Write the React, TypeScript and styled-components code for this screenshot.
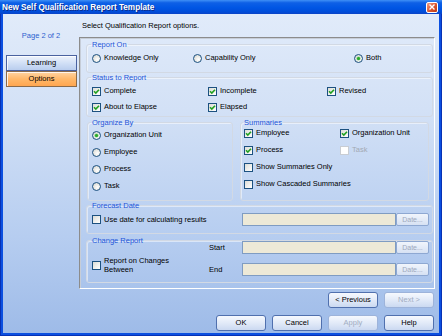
import styled, { createGlobalStyle } from 'styled-components';

const GlobalStyle = createGlobalStyle`
  html, body {
    margin: 0;
    padding: 0;
  }
  body {
    font-family: "Liberation Sans", Arial, sans-serif;
    font-size: 7.5px;
    color: #000;
  }
  #root {
    width: 442px;
    height: 336px;
  }
`;

const Window = styled.div`
  width: 442px;
  height: 336px;
  display: flex;
  flex-direction: column;
  overflow: hidden;
  background: #0b4fe0;
  box-shadow: inset 1px 0 0 #0731b4, inset -1px 0 0 #0731b4, inset 0 -1px 0 #0731b4;
`;

const TitleBar = styled.div`
  height: 14px;
  flex-shrink: 0;
  display: flex;
  align-items: center;
  justify-content: space-between;
  padding: 0 4px 0 2px;
  background: linear-gradient(180deg, #3f90f6 0%, #0e60e6 20%, #0056e4 55%, #004cd9 85%, #0a43c6 100%);
`;

const Title = styled.span`
  color: #fff;
  font-weight: bold;
  font-size: 8.2px;
  white-space: nowrap;
  text-shadow: 1px 1px 0 #0b2a8a;
`;

const CloseButton = styled.div`
  width: 12px;
  height: 11px;
  box-sizing: border-box;
  border: 1px solid #fff;
  border-radius: 2px;
  background: linear-gradient(135deg, #f2a086 0%, #da552e 55%, #bb3a15 100%);
  display: flex;
  align-items: center;
  justify-content: center;
`;

const Body = styled.div`
  flex: 1;
  margin: 0 3px 3px;
  display: flex;
  flex-direction: column;
  background: linear-gradient(180deg, #e1ebfa 0%, #d3e1f6 30%, #b6cdf0 70%, #9ebbe8 100%);
`;

const MainRow = styled.div`
  display: flex;
  height: 275px;
`;

const LeftNav = styled.div`
  width: 76px;
  flex-shrink: 0;
  padding-top: 17px;
  display: flex;
  flex-direction: column;
`;

const PageLabel = styled.div`
  text-align: center;
  line-height: 9px;
  color: #2d5fcf;
  margin-bottom: 15px;
`;

const NavButton = styled.div<{ $active?: boolean }>`
  height: 16px;
  box-sizing: border-box;
  margin: 0 2px 0 3px;
  border: 1px solid ${p => (p.$active ? '#8a6a4a' : '#4a62a0')};
  background: ${p =>
    p.$active
      ? 'linear-gradient(180deg, #ffd4a2 0%, #ffb86a 50%, #ffa650 100%)'
      : 'linear-gradient(180deg, #eef3fc 0%, #d2e0f6 50%, #b9cdee 100%)'};
  box-shadow: inset 1px 1px 0 rgba(255, 255, 255, 0.8);
  text-align: center;
  line-height: 14px;
`;

const RightCol = styled.div`
  flex: 1;
  display: flex;
  flex-direction: column;
  padding-right: 4px;
`;

const Intro = styled.div`
  padding: 7px 0 0 3px;
  line-height: 9px;
  margin-bottom: 7px;
`;

const Panel = styled.div`
  height: 252px;
  box-sizing: border-box;
  border-top: 1px solid #8c8c8c;
  border-left: 1px solid #8c8c8c;
  border-right: 1px solid #fff;
  border-bottom: 1px solid #fff;
  box-shadow: inset 1px 1px 0 #c6cdd8;
  padding: 2px 1px 0 6px;
  display: flex;
  flex-direction: column;
`;

const Group = styled.fieldset<{ $pt: number; $pb: number; $pl?: number; $mt?: number }>`
  margin: ${p => p.$mt ?? 0}px 0 0 0;
  padding: ${p => p.$pt}px 3px ${p => p.$pb}px ${p => p.$pl ?? 5}px;
  min-width: 0;
  border: 1px solid #d2d9e4;
  border-radius: 3px;
  box-shadow: inset 1px 1px 0 rgba(255, 255, 255, 0.5);
`;

const Legend = styled.legend`
  font-size: 7.5px;
  line-height: 9px;
  padding: 0 1px;
  margin-left: -1px;
  color: #1f55d8;
`;

const OptionGrid = styled.div<{ $cols: string; $gap: number }>`
  display: grid;
  grid-template-columns: ${p => p.$cols};
  row-gap: ${p => p.$gap}px;
`;

const OptionColumn = styled.div<{ $gap: number }>`
  display: flex;
  flex-direction: column;
  gap: ${p => p.$gap}px;
`;

const Option = styled.div<{ $disabled?: boolean }>`
  display: flex;
  align-items: center;
  gap: 3px;
  height: 10px;
  line-height: 10px;
  white-space: nowrap;
  color: ${p => (p.$disabled ? '#a3a9b3' : '#000')};
`;

const MultiLineOption = styled(Option)`
  height: auto;
  line-height: 9px;
  grid-row: 1 / 3;
  align-self: end;
  margin-bottom: 2px;
`;

const CheckBox = styled.span<{ $disabled?: boolean }>`
  width: 9px;
  height: 9px;
  box-sizing: border-box;
  flex-shrink: 0;
  border: 1px solid ${p => (p.$disabled ? '#c9cdd3' : '#1c5180')};
  background: ${p =>
    p.$disabled ? '#fff' : 'linear-gradient(135deg, #dcdcd6 0%, #f2f2ef 60%, #fff 100%)'};
  display: flex;
  align-items: center;
  justify-content: center;
`;

const RadioCircle = styled.span`
  width: 9px;
  height: 9px;
  box-sizing: border-box;
  flex-shrink: 0;
  border-radius: 50%;
  border: 1px solid #1c5180;
  background: radial-gradient(circle at 65% 65%, #fff 0%, #ececE8 45%, #d0d0c9 100%);
  display: flex;
  align-items: center;
  justify-content: center;
`;

const RadioDot = styled.span`
  width: 3px;
  height: 3px;
  border-radius: 50%;
  background: #28a828;
  box-shadow: 0 0 0 0.6px #86d486;
`;

const MiddleRow = styled.div`
  display: flex;
  margin: 1px 4px 0 1px;
  gap: 7px;
`;

const FieldRow = styled.div`
  display: grid;
  grid-template-columns: 150px 154px 33px;
  align-items: center;
  height: 13px;
`;

const ChangeGrid = styled.div`
  display: grid;
  grid-template-columns: 117px 33px 154px 33px;
  grid-template-rows: 13px 13px;
  row-gap: 9px;
  align-items: center;
  margin-top: -4px;
`;

const Field = styled.div`
  height: 13px;
  box-sizing: border-box;
  background: #ede9d7;
  border: 1px solid #7f9cc2;
`;

const DateButton = styled.div`
  height: 13px;
  box-sizing: border-box;
  border: 1px solid #8ea8d2;
  border-radius: 2px;
  background: linear-gradient(180deg, #f1f5fc 0%, #d6e1f3 100%);
  color: #9ea9bd;
  font-size: 7px;
  line-height: 11px;
  text-align: center;
`;

const Footer = styled.div`
  display: flex;
  flex-direction: column;
  align-items: flex-end;
  gap: 7px;
  padding: 3px 5px 0 0;
`;

const ButtonRow = styled.div`
  display: flex;
  gap: 6px;
`;

const Button = styled.div<{ $disabled?: boolean }>`
  width: 50px;
  height: 16px;
  box-sizing: border-box;
  border: 1px solid ${p => (p.$disabled ? '#9db3da' : '#5070ae')};
  border-radius: 3px;
  background: linear-gradient(180deg, #f6f9fe 0%, #e2eaf8 50%, #cbd9f1 100%);
  color: ${p => (p.$disabled ? '#a2adc2' : '#000')};
  text-align: center;
  line-height: 14px;
`;

function Check({ label, checked, disabled }: { label: string; checked?: boolean; disabled?: boolean }) {
  return (
    <Option $disabled={disabled}>
      <CheckBox $disabled={disabled}>
        {checked && (
          <svg width="7" height="7" viewBox="0 0 7 7">
            <path d="M1 3.3 L2.8 5.1 L6 1.7" fill="none" stroke="#21a121" strokeWidth="1.6" />
          </svg>
        )}
      </CheckBox>
      {label}
    </Option>
  );
}

function Radio({ label, selected }: { label: string; selected?: boolean }) {
  return (
    <Option>
      <RadioCircle>{selected && <RadioDot />}</RadioCircle>
      {label}
    </Option>
  );
}

export default function App() {
  return (
    <Window>
      <GlobalStyle />
      <TitleBar>
        <Title>New Self Qualification Report Template</Title>
        <CloseButton>
          <svg width="6" height="6" viewBox="0 0 6 6">
            <path d="M0.5 0.5 L5.5 5.5 M5.5 0.5 L0.5 5.5" stroke="#fff" strokeWidth="1.4" />
          </svg>
        </CloseButton>
      </TitleBar>
      <Body>
        <MainRow>
          <LeftNav>
            <PageLabel>Page 2 of 2</PageLabel>
            <NavButton>Learning</NavButton>
            <NavButton $active>Options</NavButton>
          </LeftNav>
          <RightCol>
            <Intro>Select Qualification Report options.</Intro>
            <Panel>
              <Group $pt={4} $pb={9}>
                <Legend>Report On</Legend>
                <OptionGrid $cols="101px 161px 1fr" $gap={0}>
                  <Radio label="Knowledge Only" />
                  <Radio label="Capability Only" />
                  <Radio label="Both" selected />
                </OptionGrid>
              </Group>
              <Group $pt={4} $pb={4}>
                <Legend>Status to Report</Legend>
                <OptionGrid $cols="116px 119px 1fr" $gap={6}>
                  <Check label="Complete" checked />
                  <Check label="Incomplete" checked />
                  <Check label="Revised" checked />
                  <Check label="About to Elapse" checked />
                  <Check label="Elapsed" checked />
                </OptionGrid>
              </Group>
              <MiddleRow>
                <Group $pt={3} $pb={9} $pl={4} style={{ width: 146, boxSizing: 'border-box' }}>
                  <Legend>Organize By</Legend>
                  <OptionColumn $gap={7}>
                    <Radio label="Organization Unit" selected />
                    <Radio label="Employee" />
                    <Radio label="Process" />
                    <Radio label="Task" />
                  </OptionColumn>
                </Group>
                <Group $pt={1} $pb={11} $pl={3} style={{ flex: 1 }}>
                  <Legend>Summaries</Legend>
                  <OptionGrid $cols="96px 1fr" $gap={7}>
                    <Check label="Employee" checked />
                    <Check label="Organization Unit" checked />
                    <Check label="Process" checked />
                    <Check label="Task" disabled />
                    <Check label="Show Summaries Only" />
                    <div />
                    <Check label="Show Cascaded Summaries" />
                  </OptionGrid>
                </Group>
              </MiddleRow>
              <Group $pt={3} $pb={7}>
                <Legend>Forecast Date</Legend>
                <FieldRow>
                  <Check label="Use date for calculating results" />
                  <Field />
                  <DateButton>Date...</DateButton>
                </FieldRow>
              </Group>
              <Group $pt={0} $pb={6} $mt={2}>
                <Legend>Change Report</Legend>
                <ChangeGrid>
                  <MultiLineOption>
                    <CheckBox />
                    <span>
                      Report on Changes
                      <br />
                      Between
                    </span>
                  </MultiLineOption>
                  <span>Start</span>
                  <Field />
                  <DateButton>Date...</DateButton>
                  <span>End</span>
                  <Field />
                  <DateButton>Date...</DateButton>
                </ChangeGrid>
              </Group>
            </Panel>
          </RightCol>
        </MainRow>
        <Footer>
          <ButtonRow>
            <Button>&lt; Previous</Button>
            <Button $disabled>Next &gt;</Button>
          </ButtonRow>
          <ButtonRow>
            <Button>OK</Button>
            <Button>Cancel</Button>
            <Button $disabled>Apply</Button>
            <Button>Help</Button>
          </ButtonRow>
        </Footer>
      </Body>
    </Window>
  );
}
